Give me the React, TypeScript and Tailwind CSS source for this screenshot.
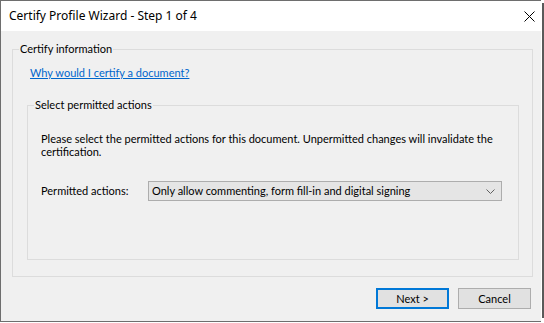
import React from "react";

function Chevron() {
  return (
    <svg width="9" height="5" viewBox="0 0 9 5" className="shrink-0">
      <path d="M0.5 0.5 L4.5 4.5 L8.5 0.5" fill="none" stroke="#606060" strokeWidth="1" />
    </svg>
  );
}

function CloseIcon() {
  return (
    <svg width="11" height="11" viewBox="0 0 11 11">
      <path d="M0.5 0.5 L10.5 10.5 M10.5 0.5 L0.5 10.5" fill="none" stroke="#000" strokeWidth="1" />
    </svg>
  );
}

export default function App() {
  return (
    <div className="flex h-[323px] w-[544px] overflow-hidden bg-white font-['Lato',sans-serif] text-[11px] leading-[16px] text-black">
      <div className="flex h-[322px] w-[541px] flex-col border-y border-l border-[#6e6e6e]">
        {/* title bar */}
        <div className="flex h-[30px] items-center justify-between bg-white pl-[8px] pr-[6px]">
          <span className="font-['Noto_Sans',sans-serif] text-[12px]">Certify Profile Wizard - Step 1 of 4</span>
          <CloseIcon />
        </div>

        <div className="flex flex-1 flex-col bg-[#f0f0f0] pt-[10px]">
          <fieldset className="ml-[11px] w-[521px] border border-[#dcdcdc] pb-[16px]">
            <legend className="ml-[6px] px-[1px]">Certify information</legend>
            <a href="#" className="ml-[17px] mt-[8px] inline-block text-[#0066cc] underline">
              Why would I certify a document?
            </a>
            <fieldset className="ml-[14px] mr-[13px] mt-[16px] border border-[#dcdcdc] pb-[58px]">
              <legend className="ml-[6px] px-[1px]">Select permitted actions</legend>
              <p className="mt-[19px] pl-[13px] leading-[13px]">
                Please select the permitted actions for this document. Unpermitted changes will invalidate the
                <br />
                certification.
              </p>
              <div className="mt-[23px] flex items-center pl-[13px]">
                <span className="w-[107px]">Permitted actions:</span>
                <div className="flex h-[20px] w-[354px] items-center justify-between border border-[#adadad] bg-[#e5e5e5] pl-[3px] pr-[6px]">
                  <span>Only allow commenting, form fill-in and digital signing</span>
                  <Chevron />
                </div>
              </div>
            </fieldset>
          </fieldset>

          <div className="mt-[11px] flex gap-[9px] pl-[375px]">
            <button className="h-[21px] w-[73px] border-2 border-[#0078d7] bg-[#e1e1e1]">Next &gt;</button>
            <button className="h-[21px] w-[73px] border border-[#adadad] bg-[#e1e1e1]">Cancel</button>
          </div>
        </div>
      </div>
      <div className="ml-[1px] mt-[3px] h-[315px] w-[2px] bg-[#5a5a5a]" />
    </div>
  );
}
